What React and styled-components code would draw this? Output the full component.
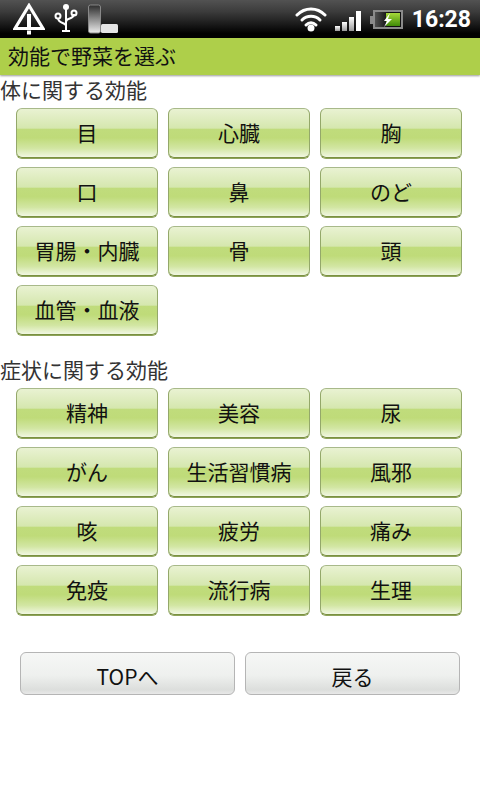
import React from "react";
import styled, { createGlobalStyle } from "styled-components";

const GlobalStyle = createGlobalStyle`
  html, body {
    margin: 0;
    padding: 0;
    background: #fff;
  }
  body {
    font-family: "Noto Sans CJK JP", "Liberation Sans", sans-serif;
    color: #000;
  }
`;

const Page = styled.div`
  width: 480px;
  height: 800px;
  overflow: hidden;
  background: #fff;
`;

const StatusBar = styled.div`
  height: 38px;
  display: flex;
  align-items: flex-start;
  justify-content: space-between;
  background: linear-gradient(#525252 0%, #3c3c3c 30%, #1e1e1e 60%, #000 88%);
`;

const StatusGroup = styled.div`
  display: flex;
  align-items: flex-start;
`;

const Clock = styled.span`
  font-family: "Roboto", "Liberation Sans", sans-serif;
  font-size: 23px;
  font-weight: 700;
  line-height: 26px;
  color: #fff;
  margin: 7px 9px 0 8px;
`;

const Header = styled.div`
  box-sizing: border-box;
  height: 37px;
  padding: 0 0 3px 8px;
  display: flex;
  align-items: center;
  background: #aecf4a;
  font-size: 21px;
  color: #111;
  box-shadow: 0 1px 2px rgba(0, 0, 0, 0.4);
`;

const SectionTitle = styled.div`
  font-size: 21px;
  line-height: 27px;
  color: #333;
  margin-top: ${(p) => p.$top}px;
`;

const Grid = styled.div`
  display: grid;
  grid-template-columns: repeat(3, 142px);
  grid-auto-rows: 50px;
  column-gap: 10px;
  row-gap: 9px;
  padding-left: 16px;
  margin-top: 5px;
`;

const GreenButton = styled.button`
  box-sizing: border-box;
  padding: 0 0 3px;
  font-family: inherit;
  font-size: 21px;
  color: #111;
  border-radius: 6px;
  border: 1px solid #a8b98a;
  border-bottom-color: #7a9140;
  border-left-color: #94a86a;
  border-right-color: #94a86a;
  box-shadow: 0 1px 0 #8ea35a;
  background: linear-gradient(
    #e9f2d2 0%,
    #d5e7ae 40%,
    #c0dc7c 42%,
    #bfdb79 60%,
    #d2e6a3 82%,
    #f1f7e2 100%
  );
`;

const Footer = styled.div`
  display: grid;
  grid-template-columns: repeat(2, 215px);
  column-gap: 10px;
  padding-left: 20px;
  margin-top: 37px;
`;

const GrayButton = styled.button`
  box-sizing: border-box;
  height: 43px;
  padding: 4px 0 0;
  font-family: inherit;
  font-size: 21px;
  color: #111;
  border-radius: 6px;
  border: 1px solid #b5b5b5;
  background: linear-gradient(#f6f7f6 0%, #eef0ee 55%, #dcdedc 90%, #e8e8e8 100%);
`;

const WarningIcon = () => (
  <svg width="32" height="32" viewBox="0 0 32 32" style={{ marginLeft: 13, marginTop: 3 }}>
    <path d="M16 2.5 L30 25.5 H2 Z" fill="none" stroke="#fff" strokeWidth="3.2" />
    <rect x="14" y="11" width="4" height="13" fill="#fff" />
    <rect x="14" y="27.5" width="4" height="4" fill="#fff" />
  </svg>
);

const UsbIcon = () => (
  <svg width="24" height="30" viewBox="0 0 24 30" style={{ marginLeft: 9, marginTop: 3 }}>
    <g fill="none" stroke="#fff" strokeWidth="2">
      <path d="M12 3 V28" />
      <path d="M4 15 C4 21 12 19 12 23" />
      <path d="M20 11 C20 17 12 14 12 19" />
      <circle cx="4" cy="13" r="2.5" />
      <circle cx="20" cy="10" r="2.5" />
    </g>
    <circle cx="12" cy="4" r="3" fill="#fff" />
    <rect x="8" y="27" width="8" height="2" fill="#fff" />
  </svg>
);

const SdIcon = () => (
  <svg width="31" height="30" viewBox="0 0 31 30" style={{ marginLeft: 10, marginTop: 4 }}>
    <defs>
      <linearGradient id="sd" x1="0" y1="0" x2="0" y2="1">
        <stop offset="0" stopColor="#2c2c2c" />
        <stop offset="1" stopColor="#ececec" />
      </linearGradient>
    </defs>
    <rect x="0.5" y="1" width="12" height="28" rx="2" fill="url(#sd)" stroke="#888" />
    <rect x="13" y="20" width="17" height="9" rx="1.5" fill="#e4e4e4" />
  </svg>
);

const WifiIcon = () => (
  <svg width="32" height="26" viewBox="0 0 32 26" style={{ marginTop: 6 }}>
    <g fill="none" stroke="#fff" strokeWidth="3" strokeLinecap="round">
      <path d="M2 9 C10 1 22 1 30 9" />
      <path d="M7 14 C12 9 20 9 25 14" />
      <path d="M11 19 C14 16 18 16 21 19" />
    </g>
    <circle cx="16" cy="22" r="3.5" fill="#fff" />
  </svg>
);

const SignalIcon = () => (
  <svg width="27" height="20" viewBox="0 0 27 20" style={{ marginLeft: 8, marginTop: 11 }}>
    <defs>
      <linearGradient id="bar" x1="0" y1="0" x2="0" y2="1">
        <stop offset="0" stopColor="#fff" />
        <stop offset="1" stopColor="#999" />
      </linearGradient>
    </defs>
    <rect x="0" y="15" width="5" height="5" fill="url(#bar)" />
    <rect x="7" y="11" width="5" height="9" fill="url(#bar)" />
    <rect x="14" y="6" width="5" height="14" fill="url(#bar)" />
    <rect x="21" y="0" width="5" height="20" fill="#fff" />
  </svg>
);

const BatteryIcon = () => (
  <svg width="34" height="20" viewBox="0 0 34 20" style={{ marginLeft: 8, marginTop: 9 }}>
    <defs>
      <linearGradient id="cell" x1="0" y1="0" x2="1" y2="0">
        <stop offset="0" stopColor="#555" />
        <stop offset="0.5" stopColor="#111" />
        <stop offset="1" stopColor="#111" />
      </linearGradient>
      <linearGradient id="charge" x1="0" y1="0" x2="0" y2="1">
        <stop offset="0" stopColor="#a6d93a" />
        <stop offset="1" stopColor="#3f8a08" />
      </linearGradient>
    </defs>
    <rect x="4" y="2" width="28" height="17" fill="url(#cell)" stroke="#8a8a8a" strokeWidth="2" />
    <rect x="0" y="7" width="4" height="8" fill="#8a8a8a" />
    <rect x="16" y="4" width="14" height="13" fill="url(#charge)" />
    <path d="M20 4 L14 12 H17 L14 18 L22 10 H18 Z" fill="#fff" />
  </svg>
);

const bodyItems = ["目", "心臓", "胸", "口", "鼻", "のど", "胃腸・内臓", "骨", "頭", "血管・血液"];
const symptomItems = [
  "精神", "美容", "尿", "がん", "生活習慣病", "風邪",
  "咳", "疲労", "痛み", "免疫", "流行病", "生理",
];

const App = () => {
  return (
    <Page>
      <GlobalStyle />
      <StatusBar>
        <StatusGroup>
          <WarningIcon />
          <UsbIcon />
          <SdIcon />
        </StatusGroup>
        <StatusGroup>
          <WifiIcon />
          <SignalIcon />
          <BatteryIcon />
          <Clock>16:28</Clock>
        </StatusGroup>
      </StatusBar>
      <Header>効能で野菜を選ぶ</Header>
      <SectionTitle $top={1}>体に関する効能</SectionTitle>
      <Grid>
        {bodyItems.map((item) => (
          <GreenButton key={item}>{item}</GreenButton>
        ))}
      </Grid>
      <SectionTitle $top={21}>症状に関する効能</SectionTitle>
      <Grid>
        {symptomItems.map((item) => (
          <GreenButton key={item}>{item}</GreenButton>
        ))}
      </Grid>
      <Footer>
        <GrayButton>TOPへ</GrayButton>
        <GrayButton>戻る</GrayButton>
      </Footer>
    </Page>
  );
};

export default App;
